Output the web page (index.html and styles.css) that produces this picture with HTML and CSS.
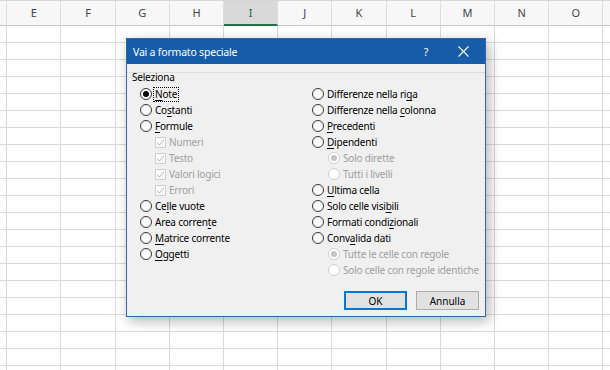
FILE: index.html
```html
<!DOCTYPE html>
<html lang="it">
<head>
  <meta charset="UTF-8" />
  <title>Vai a formato speciale</title>
  <link rel="stylesheet" href="styles.css">
</head>
<body>

  <div class="sheet">
    <div class="heads">
      <div class="head"></div>
      <div class="head">E</div>
      <div class="head">F</div>
      <div class="head">G</div>
      <div class="head">H</div>
      <div class="head active">I</div>
      <div class="head">J</div>
      <div class="head">K</div>
      <div class="head">L</div>
      <div class="head">M</div>
      <div class="head">N</div>
      <div class="head">O</div>
      <div class="head"></div>
    </div>
    <div class="cells">
      <div class="col"></div><div class="col"></div><div class="col"></div>
      <div class="col"></div><div class="col"></div><div class="col"></div>
      <div class="col"></div><div class="col"></div><div class="col"></div>
      <div class="col"></div><div class="col"></div><div class="col"></div>
      <div class="col"></div>
    </div>

    <div class="dialog">
      <div class="titlebar">
        <span class="title">Vai a formato speciale</span>
        <span class="help">?</span>
        <svg class="close" width="11" height="11" viewBox="0 0 11 11">
          <path d="M0.5 0.5 L10.5 10.5 M10.5 0.5 L0.5 10.5" stroke="#fff" stroke-width="1.1" fill="none"/>
        </svg>
      </div>

      <div class="body">
        <div class="legend">Seleziona</div>

        <div class="options">
          <div class="column left">
            <div class="opt"><span class="radio on"></span><span class="label focus"><u>N</u>ote</span></div>
            <div class="opt"><span class="radio"></span><span class="label">Co<u>s</u>tanti</span></div>
            <div class="opt"><span class="radio"></span><span class="label"><u>F</u>ormule</span></div>
            <div class="opt sub off"><span class="check"><svg width="9" height="9" viewBox="0 0 9 9"><path d="M1 4.6 L3.4 7 L8 1.8" stroke="#c2c2c2" stroke-width="1.1" fill="none"/></svg></span><span class="label">Numeri</span></div>
            <div class="opt sub off"><span class="check"><svg width="9" height="9" viewBox="0 0 9 9"><path d="M1 4.6 L3.4 7 L8 1.8" stroke="#c2c2c2" stroke-width="1.1" fill="none"/></svg></span><span class="label">Testo</span></div>
            <div class="opt sub off"><span class="check"><svg width="9" height="9" viewBox="0 0 9 9"><path d="M1 4.6 L3.4 7 L8 1.8" stroke="#c2c2c2" stroke-width="1.1" fill="none"/></svg></span><span class="label">Valori logici</span></div>
            <div class="opt sub off"><span class="check"><svg width="9" height="9" viewBox="0 0 9 9"><path d="M1 4.6 L3.4 7 L8 1.8" stroke="#c2c2c2" stroke-width="1.1" fill="none"/></svg></span><span class="label">Errori</span></div>
            <div class="opt"><span class="radio"></span><span class="label">Ce<u>l</u>le vuote</span></div>
            <div class="opt"><span class="radio"></span><span class="label">Area corren<u>t</u>e</span></div>
            <div class="opt"><span class="radio"></span><span class="label"><u>M</u>atrice corrente</span></div>
            <div class="opt"><span class="radio"></span><span class="label"><u>O</u>ggetti</span></div>
          </div>

          <div class="column right">
            <div class="opt"><span class="radio"></span><span class="label">Differenze nella ri<u>g</u>a</span></div>
            <div class="opt"><span class="radio"></span><span class="label">Differenze nella <u>c</u>olonna</span></div>
            <div class="opt"><span class="radio"></span><span class="label"><u>P</u>recedenti</span></div>
            <div class="opt"><span class="radio"></span><span class="label"><u>D</u>ipendenti</span></div>
            <div class="opt sub off"><span class="radio on"></span><span class="label">Solo dirette</span></div>
            <div class="opt sub off"><span class="radio"></span><span class="label">Tutti i livelli</span></div>
            <div class="opt"><span class="radio"></span><span class="label"><u>U</u>ltima cella</span></div>
            <div class="opt"><span class="radio"></span><span class="label">Solo celle visi<u>b</u>ili</span></div>
            <div class="opt"><span class="radio"></span><span class="label">Formati condi<u>z</u>ionali</span></div>
            <div class="opt"><span class="radio"></span><span class="label">Conv<u>a</u>lida dati</span></div>
            <div class="opt sub off"><span class="radio on"></span><span class="label">Tutte le celle con regole</span></div>
            <div class="opt sub off"><span class="radio"></span><span class="label">Solo celle con regole identiche</span></div>
          </div>
        </div>

        <div class="actions">
          <button class="btn default">OK</button>
          <button class="btn">Annulla</button>
        </div>
      </div>
    </div>
  </div>

</body>
</html>
```

FILE: styles.css
```css
body {
  margin: 0;
  background: #fff;
  overflow: hidden;
  font-family: "Noto Sans", "Open Sans", sans-serif;
}

.sheet {
  position: relative;
  width: 610px;
  height: 370px;
  overflow: hidden;
}

/* intestazioni colonne */
.heads {
  display: flex;
  height: 26px;
  margin-left: -46.9px;
  border-top: 1px solid #d6d6d6;
  box-sizing: border-box;
  background: #f7f7f7;
}

.head {
  flex: 0 0 54.2px;
  box-sizing: border-box;
  border-right: 1px solid #dedede;
  border-bottom: 1px solid #c8c8c8;
  text-align: center;
  font-size: 11px;
  line-height: 24px;
  color: #444;
}

.head.active {
  background: #d9d9d9;
  border-bottom: 2px solid #217346;
  color: #1e5e3a;
}

/* griglia celle */
.cells {
  display: flex;
  height: 344px;
  margin-left: -46.9px;
  background-image: linear-gradient(to bottom, transparent 16px, #dadada 16px);
  background-size: 100% 17px;
}

.col {
  flex: 0 0 54.2px;
  box-sizing: border-box;
  border-right: 1px solid #dadada;
}

/* finestra di dialogo */
.dialog {
  position: absolute;
  left: 126px;
  top: 38px;
  width: 360px;
  height: 279px;
  box-sizing: border-box;
  border: 1px solid #2f68a8;
  background: #f0f0f0;
  box-shadow: 3px 4px 12px rgba(0, 0, 0, 0.3);
  font-size: 10px;
  letter-spacing: -0.2px;
  color: #000;
}

.titlebar {
  display: flex;
  align-items: center;
  height: 25px;
  background: #175ca8;
  color: #fff;
  padding-left: 6px;
  font-size: 10.5px;
}

.title {
  flex: 1;
}

.help {
  width: 20px;
  text-align: center;
  margin-right: 22px;
}

.close {
  margin-right: 16px;
}

.body {
  padding: 5px 5px 0 5px;
  position: relative;
}

.body::before {
  content: "";
  position: absolute;
  left: 0;
  right: 0;
  top: 8px;
  border-top: 1px solid #dcdcdc;
}

.legend {
  position: relative;
  line-height: 16px;
}

.options {
  display: grid;
  grid-template-columns: 180px 1fr;
  margin-top: 1px;
}

.column.left {
  padding-left: 8px;
}

.opt {
  display: flex;
  align-items: center;
  height: 16px;
  white-space: nowrap;
}

.opt u {
  text-decoration: underline;
  text-underline-offset: 2px;
}

.opt.sub {
  padding-left: 16px;
}

.left .opt.sub {
  padding-left: 15px;
}

.opt.off {
  color: #a0a0a0;
}

.radio {
  flex: none;
  width: 12px;
  height: 12px;
  box-sizing: border-box;
  border: 1px solid #333;
  border-radius: 50%;
  background: #fff;
  margin-right: 3px;
  display: flex;
  align-items: center;
  justify-content: center;
}

.radio.on::after {
  content: "";
  width: 6px;
  height: 6px;
  border-radius: 50%;
  background: #000;
}

.off .radio {
  border-color: #d0d0d0;
}

.off .radio.on::after {
  background: #c4c4c4;
}

.check {
  flex: none;
  width: 11px;
  height: 11px;
  box-sizing: border-box;
  border: 1px solid #cccccc;
  background: #fff;
  margin-right: 3px;
  display: flex;
  align-items: center;
  justify-content: center;
}

.focus {
  outline: 1px dotted #000;
  outline-offset: 0;
  padding: 0 1px;
  margin-left: -1px;
  line-height: 13px;
}

.actions {
  display: flex;
  justify-content: flex-end;
  gap: 9px;
  margin-top: 13px;
  margin-right: 1px;
}

.btn {
  width: 63px;
  height: 19px;
  padding: 0;
  box-sizing: border-box;
  border: 1px solid #adadad;
  background: #e1e1e1;
  font-family: inherit;
  font-size: 10px;
  color: #000;
}

.btn.default {
  border-color: #0078d7;
  box-shadow: inset 0 0 0 1px #0078d7;
}
```
